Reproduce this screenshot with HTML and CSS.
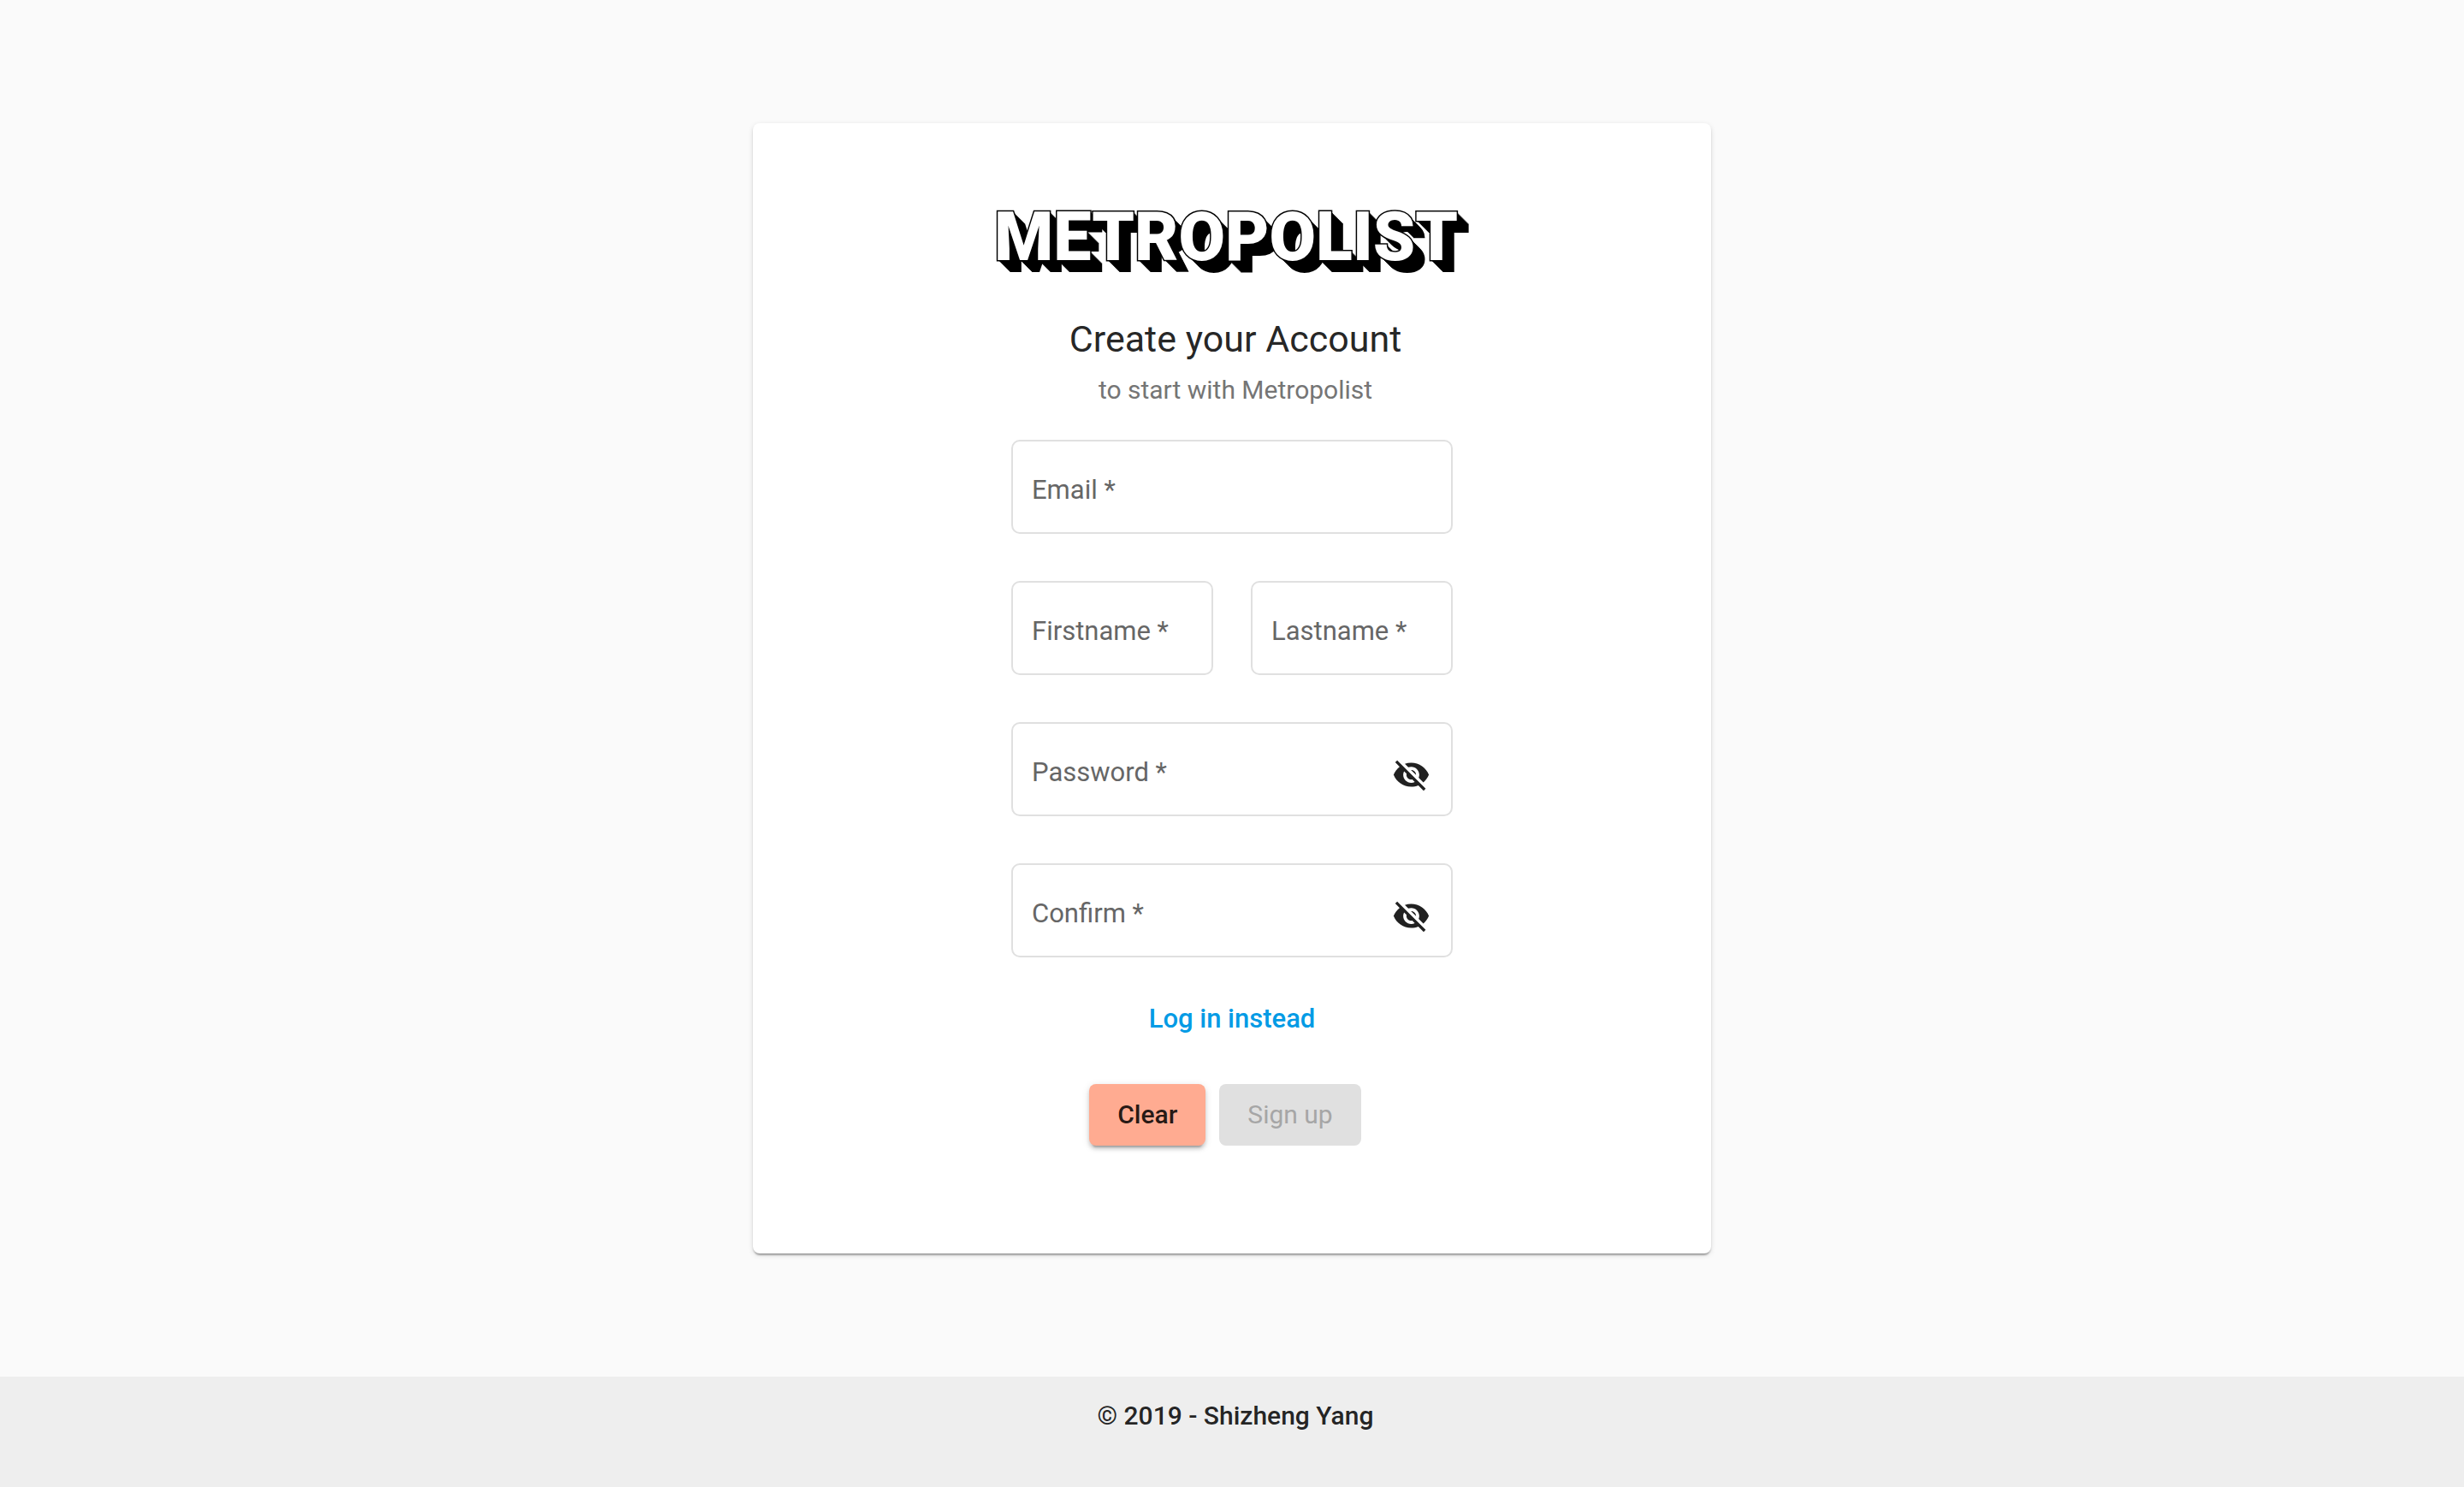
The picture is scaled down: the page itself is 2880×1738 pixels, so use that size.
FILE: index.html
```html
<!DOCTYPE html>
<html lang="en">
<head>
<meta charset="utf-8">
<meta name="viewport" content="width=device-width, initial-scale=1">
<title>Metropolist</title>
<link rel="stylesheet" href="styles.css">
</head>
<body>
<main class="page">
  <section class="card">
    <div class="logo">METROPOLIST</div>
    <header class="intro">
      <h1 class="title">Create your Account</h1>
      <p class="subtitle">to start with Metropolist</p>
    </header>
    <form class="form">
      <div class="fields">
        <div class="field field-wide">
          <input class="field-input" id="email" type="email" required>
          <label class="field-label" for="email">Email *</label>
        </div>
        <div class="field">
          <input class="field-input" id="firstname" type="text" required>
          <label class="field-label" for="firstname">Firstname *</label>
        </div>
        <div class="field">
          <input class="field-input" id="lastname" type="text" required>
          <label class="field-label" for="lastname">Lastname *</label>
        </div>
        <div class="field field-wide">
          <input class="field-input" id="password" type="password" required>
          <label class="field-label" for="password">Password *</label>
          <button class="toggle" type="button" aria-label="Show password">
            <svg class="icon" viewBox="0 0 24 24" aria-hidden="true"><path d="M12 7c2.76 0 5 2.24 5 5 0 .65-.13 1.26-.36 1.83l2.92 2.92c1.51-1.26 2.7-2.89 3.43-4.75-1.73-4.39-6-7.5-11-7.5-1.4 0-2.74.25-3.98.7l2.16 2.16C10.74 7.13 11.35 7 12 7zM2 4.27l2.28 2.28.46.46C3.08 8.3 1.78 10.02 1 12c1.73 4.39 6 7.5 11 7.5 1.55 0 3.03-.3 4.38-.84l.42.42L19.73 22 21 20.73 3.27 3 2 4.27zM7.53 9.8l1.55 1.55c-.05.21-.08.43-.08.65 0 1.66 1.34 3 3 3 .22 0 .44-.03.65-.08l1.55 1.55c-.67.33-1.41.53-2.2.53-2.76 0-5-2.24-5-5 0-.79.2-1.53.53-2.2zm4.31-.78l3.15 3.15.02-.16c0-1.66-1.34-3-3-3l-.17.01z"/></svg>
          </button>
        </div>
        <div class="field field-wide">
          <input class="field-input" id="confirm" type="password" required>
          <label class="field-label" for="confirm">Confirm *</label>
          <button class="toggle" type="button" aria-label="Show confirmation">
            <svg class="icon" viewBox="0 0 24 24" aria-hidden="true"><path d="M12 7c2.76 0 5 2.24 5 5 0 .65-.13 1.26-.36 1.83l2.92 2.92c1.51-1.26 2.7-2.89 3.43-4.75-1.73-4.39-6-7.5-11-7.5-1.4 0-2.74.25-3.98.7l2.16 2.16C10.74 7.13 11.35 7 12 7zM2 4.27l2.28 2.28.46.46C3.08 8.3 1.78 10.02 1 12c1.73 4.39 6 7.5 11 7.5 1.55 0 3.03-.3 4.38-.84l.42.42L19.73 22 21 20.73 3.27 3 2 4.27zM7.53 9.8l1.55 1.55c-.05.21-.08.43-.08.65 0 1.66 1.34 3 3 3 .22 0 .44-.03.65-.08l1.55 1.55c-.67.33-1.41.53-2.2.53-2.76 0-5-2.24-5-5 0-.79.2-1.53.53-2.2zm4.31-.78l3.15 3.15.02-.16c0-1.66-1.34-3-3-3l-.17.01z"/></svg>
          </button>
        </div>
      </div>
      <a class="login-link" href="#login">Log in instead</a>
      <div class="actions">
        <button class="button button-clear" type="reset">Clear</button>
        <button class="button button-submit" type="submit" disabled>Sign up</button>
      </div>
    </form>
  </section>
</main>
<footer class="footer">© 2019 - Shizheng Yang</footer>
</body>
</html>
```
FILE: styles.css
```css
* {
  box-sizing: border-box;
}

body {
  margin: 0;
  min-height: 100vh;
  display: flex;
  flex-direction: column;
  background: #fafafa;
  color: rgba(0, 0, 0, 0.87);
  font-family: Roboto, "Liberation Sans", sans-serif;
  font-size: 30px;
  line-height: 40px;
}

.page {
  display: flex;
  justify-content: center;
  padding: 144px 16px;
}

.card {
  width: 100%;
  max-width: 1120px;
  display: flex;
  flex-direction: column;
  align-items: center;
  padding: 101px 32px 126px;
  background: #fff;
  border-radius: 8px;
  box-shadow: 0 4px 2px -2px rgba(0, 0, 0, 0.2), 0 2px 2px rgba(0, 0, 0, 0.14), 0 2px 6px rgba(0, 0, 0, 0.12);
}

/* White block letters with a solid extrusion towards the lower right */
.logo {
  padding-right: 14px;
  font-size: 79px;
  font-weight: 900;
  line-height: 64px;
  color: #fff;
  -webkit-text-stroke: 3px #000;
  paint-order: stroke fill;
  text-shadow: 1px 1px #000, 2px 2px #000, 3px 3px #000, 4px 4px #000, 5px 5px #000,
    6px 6px #000, 7px 7px #000, 8px 8px #000, 9px 9px #000, 10px 10px #000,
    11px 11px #000, 12px 12px #000, 13px 13px #000, 14px 14px #000;
}

.intro {
  display: flex;
  flex-direction: column;
  gap: 12px;
  margin-top: 59px;
  padding-left: 8px;
  text-align: center;
}

.title {
  margin: 0;
  font-size: 43px;
  font-weight: 400;
  line-height: 56px;
}

.subtitle {
  margin: 0;
  color: #757575;
}

.form {
  width: 100%;
  max-width: 516px;
  display: flex;
  flex-direction: column;
  align-items: center;
  margin-top: 38px;
}

.fields {
  width: 100%;
  display: grid;
  grid-template-columns: 1fr 1fr;
  gap: 55px 44px;
}

.field {
  display: grid;
  grid-template-columns: 1fr auto;
  align-items: center;
  height: 110px;
  border: 2px solid #e0e0e0;
  border-radius: 10px;
}

.field-wide {
  grid-column: 1 / -1;
}

.field-input {
  grid-area: 1 / 1 / 2 / 3;
  width: 100%;
  height: 100%;
  min-width: 0;
  padding: 8px 22px 0;
  border: 0;
  outline: 0;
  background: transparent;
  color: inherit;
  font: inherit;
}

.field-label {
  grid-area: 1 / 1;
  padding: 8px 0 0 22px;
  font-size: 31px;
  color: #666;
  pointer-events: none;
}

.field-input:focus + .field-label,
.field-input:valid + .field-label {
  visibility: hidden;
}

.toggle {
  grid-area: 1 / 2;
  display: flex;
  padding: 12px 24px 0 0;
  border: 0;
  background: transparent;
  color: #212121;
  cursor: pointer;
}

.icon {
  width: 45px;
  height: 45px;
  fill: currentColor;
}

.login-link {
  margin-top: 52px;
  font-size: 31px;
  font-weight: 500;
  color: #039be5;
  text-decoration: none;
}

.actions {
  display: flex;
  margin-top: 56px;
}

.button {
  height: 72px;
  margin-right: 16px;
  padding: 0 33px;
  border: 0;
  border-radius: 8px;
  font: inherit;
}

.button-clear {
  background: #ffab91;
  color: rgba(0, 0, 0, 0.87);
  font-weight: 500;
  box-shadow: 0 6px 2px -4px rgba(0, 0, 0, 0.2), 0 4px 4px rgba(0, 0, 0, 0.14), 0 2px 10px rgba(0, 0, 0, 0.12);
}

.button-submit {
  background: #e0e0e0;
  color: #a6a6a6;
}

.footer {
  flex: 1;
  padding: 26px 16px 62px 24px;
  background: #eee;
  font-weight: 500;
  text-align: center;
}
```
